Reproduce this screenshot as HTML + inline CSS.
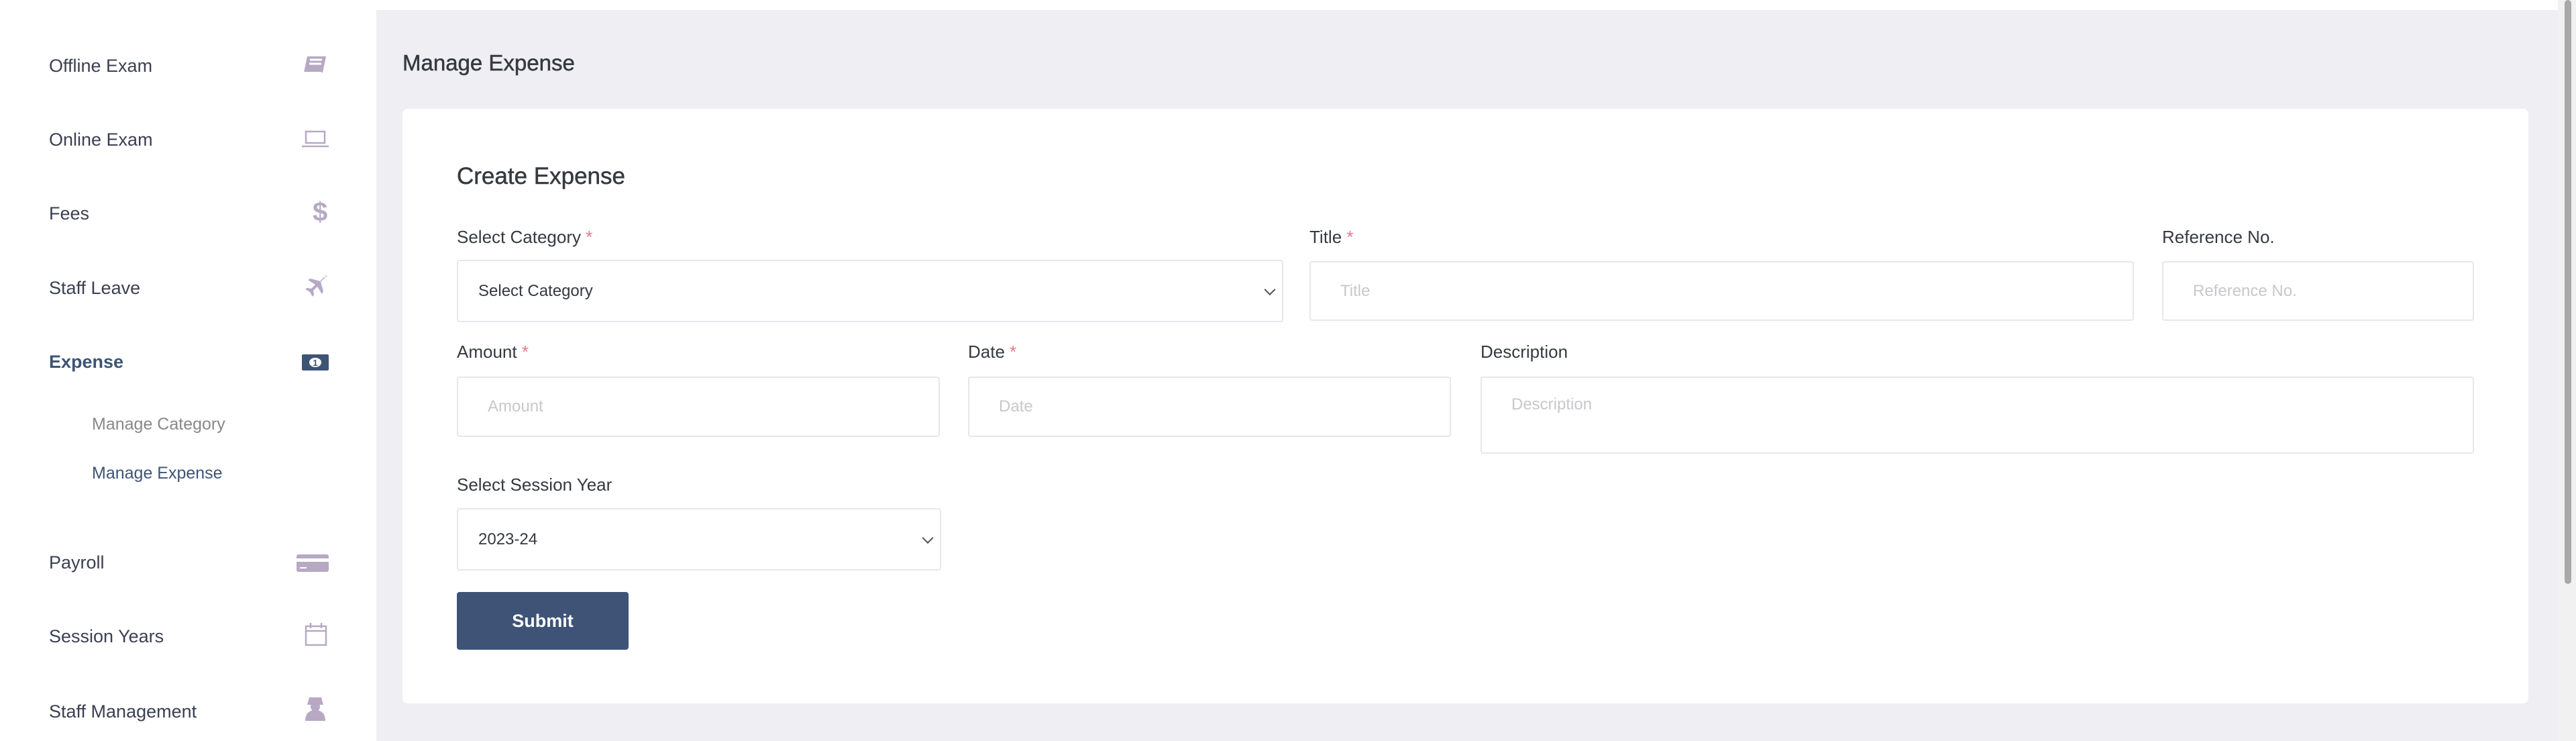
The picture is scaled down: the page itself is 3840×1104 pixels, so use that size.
<!DOCTYPE html>
<html><head><meta charset="utf-8"><style>
*{box-sizing:border-box;margin:0;padding:0}
body{width:3840px;height:1104px;overflow:hidden;background:#fff;font-family:"Liberation Sans",sans-serif;position:relative;color:#343a40}
.sb{position:absolute;left:0;top:0;width:561px;height:1104px;background:#fff}
.it{position:absolute;left:73px;font-size:27px;color:#3b3f52;line-height:30px}
.ic{position:absolute;left:448px;width:44px;height:38px}
.sub{position:absolute;left:137px;font-size:25px;color:#888;line-height:30px}
.main{position:absolute;left:561px;top:15px;width:3252px;height:1089px;background:#efeef3}
.sc{position:absolute;left:3813px;top:0;width:27px;height:1104px;background:#f1f1f1}
.sc div{position:absolute;left:10px;top:0;width:10px;height:870px;background:#a8a8a8;border-radius:5px}
.card{position:absolute;left:600px;top:162px;width:3169px;height:886px;background:#fff;border-radius:8px}
.lbl{position:absolute;font-size:26px;color:#343a40;line-height:30px}
.lbl b{color:#e07a8a;font-weight:normal}
.box{position:absolute;border:2px solid #e6e6ee;border-radius:4px;background:#fff;font-size:24px;color:#c8c8cc;padding-left:44px;display:flex;align-items:center}
.sel{color:#343a40;padding-left:30px}
.sel:after{content:"";position:absolute;right:12px;top:50%;width:10px;height:10px;border-right:2px solid #555;border-bottom:2px solid #555;transform:translateY(-70%) rotate(45deg)}
</style></head><body>
<div class="sb">
<div class="it" style="top:83px">Offline Exam</div>
<svg class="ic" style="top:78px" viewBox="0 0 44 38"><path d="M10 6h28l-5 24H5z" fill="#b7a9c4"/><path d="M14 11h18M13 17h18" stroke="#fff" stroke-width="3"/><path d="M5 30h26" stroke="#fff" stroke-width="2"/></svg>
<div class="it" style="top:193px">Online Exam</div>
<svg class="ic" style="top:188px" viewBox="0 0 44 38"><rect x="8" y="8" width="28" height="17" fill="none" stroke="#b7a9c4" stroke-width="2.5"/><path d="M2 30h40" stroke="#b7a9c4" stroke-width="2.5"/></svg>
<div class="it" style="top:303px">Fees</div>
<div style="position:absolute;left:466px;top:294px;font-size:40px;font-weight:bold;color:#b7a9c4">$</div>
<div class="it" style="top:414px">Staff Leave</div>
<svg class="ic" style="top:406px" viewBox="0 0 44 38"><path d="M42 8c-2-3-6-2-8 0l-5 5-14-4-4 2 11 7-6 6-6-1-3 2 7 4 4 7 2-3-1-6 6-6 7 11 2-4-4-14 5-5c2-2 3-4 1-6z" fill="#b7a9c4"/></svg>
<div class="it" style="top:524px;color:#3d5475;font-weight:bold">Expense</div>
<svg class="ic" style="top:520px" viewBox="0 0 44 38"><rect x="2" y="8" width="40" height="24" rx="2" fill="#3d5475"/><ellipse cx="22" cy="20" rx="9" ry="7" fill="#fff"/><text x="22" y="25" font-size="13" text-anchor="middle" fill="#3d5475" font-family="Liberation Sans" font-weight="bold">1</text></svg>
<div class="sub" style="top:617px">Manage Category</div>
<div class="sub" style="top:690px;color:#3d5475">Manage Expense</div>
<div class="it" style="top:823px">Payroll</div>
<svg class="ic" style="top:820px;left:440px;width:52px" viewBox="0 0 52 38"><rect x="2" y="6" width="48" height="26" rx="3" fill="#b7a9c4"/><rect x="2" y="12" width="48" height="5" fill="#fff"/><path d="M7 26h10" stroke="#fff" stroke-width="2"/></svg>
<div class="it" style="top:933px">Session Years</div>
<svg class="ic" style="top:926px" viewBox="0 0 44 38"><rect x="8" y="7" width="30" height="28" fill="none" stroke="#b7a9c4" stroke-width="2.5"/><path d="M8 14h30M15 2v8M31 2v8" stroke="#b7a9c4" stroke-width="2.5"/></svg>
<div class="it" style="top:1045px">Staff Management</div>
<svg class="ic" style="top:1036px" viewBox="0 0 44 38"><path d="M13 3h18l3 11H10z" fill="#b7a9c4"/><path d="M7 38c0-11 6-16 15-16s15 5 15 16z" fill="#b7a9c4"/><circle cx="22" cy="17" r="7" fill="#b7a9c4"/></svg>
</div>
<div class="main"></div>
<div class="sc"><div></div></div>
<div style="position:absolute;left:600px;top:75px;font-size:33px;color:#343a40;-webkit-text-stroke:0.5px #343a40">Manage Expense</div>
<div class="card"></div>
<div style="position:absolute;left:681px;top:243px;font-size:35px;color:#343a40;-webkit-text-stroke:0.5px #343a40">Create Expense</div>
<div class="lbl" style="left:681px;top:338px">Select Category <b>*</b></div>
<div class="box sel" style="left:681px;top:387px;width:1232px;height:93px">Select Category</div>
<div class="lbl" style="left:1952px;top:338px">Title <b>*</b></div>
<div class="box" style="left:1952px;top:389px;width:1229px;height:89px">Title</div>
<div class="lbl" style="left:3223px;top:338px">Reference No.</div>
<div class="box" style="left:3223px;top:389px;width:465px;height:89px">Reference No.</div>
<div class="lbl" style="left:681px;top:509px">Amount <b>*</b></div>
<div class="box" style="left:681px;top:561px;width:720px;height:90px">Amount</div>
<div class="lbl" style="left:1443px;top:509px">Date <b>*</b></div>
<div class="box" style="left:1443px;top:561px;width:720px;height:90px">Date</div>
<div class="lbl" style="left:2207px;top:509px">Description</div>
<div class="box" style="left:2207px;top:561px;width:1481px;height:115px;align-items:flex-start;padding-top:26px">Description</div>
<div class="lbl" style="left:681px;top:707px">Select Session Year</div>
<div class="box sel" style="left:681px;top:757px;width:722px;height:93px">2023-24</div>
<div style="position:absolute;left:681px;top:882px;width:256px;height:86px;background:#3e5376;border-radius:4px;color:#fff;font-weight:bold;font-size:27px;display:flex;align-items:center;justify-content:center">Submit</div>
</body></html>
